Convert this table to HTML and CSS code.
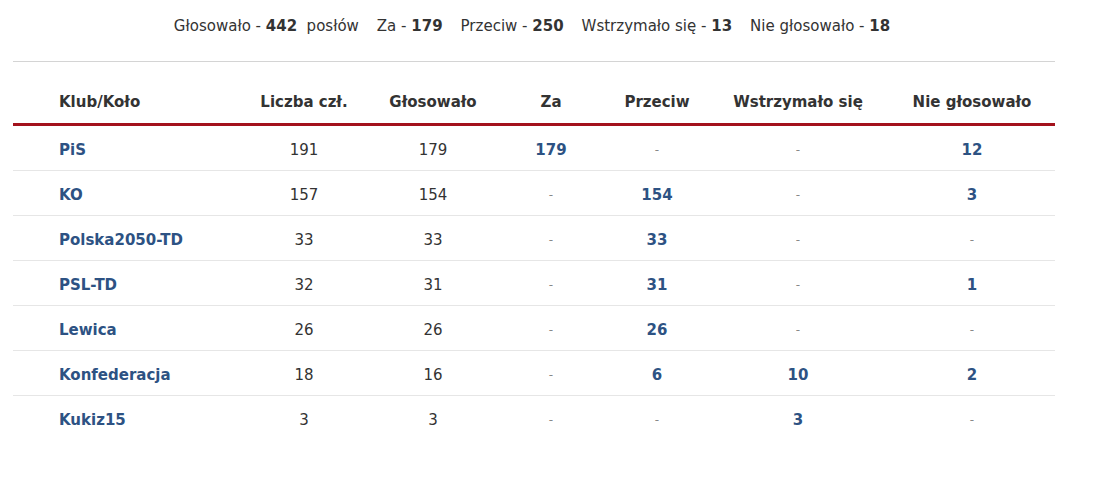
FILE: index.html
```html
<!DOCTYPE html>
<html lang="pl">
<head>
<meta charset="utf-8">
<link rel="stylesheet" href="styles.css">
</head>
<body>
<div class="wrap">
  <div class="summary">
    <span>Głosowało - <b>442</b>&nbsp; posłów</span>
    <span>Za - <b>179</b></span>
    <span>Przeciw - <b>250</b></span>
    <span>Wstrzymało się - <b>13</b></span>
    <span>Nie głosowało - <b>18</b></span>
  </div>
  <table class="votes">
    <colgroup>
      <col class="c1"><col class="c2"><col class="c3"><col class="c4"><col class="c5"><col class="c6"><col class="c7">
    </colgroup>
    <thead>
      <tr>
        <th class="club">Klub/Koło</th>
        <th>Liczba czł.</th>
        <th>Głosowało</th>
        <th>Za</th>
        <th>Przeciw</th>
        <th>Wstrzymało się</th>
        <th>Nie głosowało</th>
      </tr>
    </thead>
    <tbody>
      <tr><td class="club"><a>PiS</a></td><td>191</td><td>179</td><td class="v">179</td><td class="d">-</td><td class="d">-</td><td class="v">12</td></tr>
      <tr><td class="club"><a>KO</a></td><td>157</td><td>154</td><td class="d">-</td><td class="v">154</td><td class="d">-</td><td class="v">3</td></tr>
      <tr><td class="club"><a>Polska2050-TD</a></td><td>33</td><td>33</td><td class="d">-</td><td class="v">33</td><td class="d">-</td><td class="d">-</td></tr>
      <tr><td class="club"><a>PSL-TD</a></td><td>32</td><td>31</td><td class="d">-</td><td class="v">31</td><td class="d">-</td><td class="v">1</td></tr>
      <tr><td class="club"><a>Lewica</a></td><td>26</td><td>26</td><td class="d">-</td><td class="v">26</td><td class="d">-</td><td class="d">-</td></tr>
      <tr><td class="club"><a>Konfederacja</a></td><td>18</td><td>16</td><td class="d">-</td><td class="v">6</td><td class="v">10</td><td class="v">2</td></tr>
      <tr><td class="club"><a>Kukiz15</a></td><td>3</td><td>3</td><td class="d">-</td><td class="d">-</td><td class="v">3</td><td class="d">-</td></tr>
    </tbody>
  </table>
</div>
</body>
</html>
```
FILE: styles.css
```css
html, body {
  margin: 0;
  padding: 0;
  background: #fff;
}
body {
  font-family: "DejaVu Sans", Verdana, sans-serif;
  color: #333;
  font-size: 15px;
}
.wrap {
  margin-left: 13px;
  width: 1042px;
}
.summary {
  height: 62px;
  box-sizing: border-box;
  padding-top: 17px;
  padding-right: 4px;
  line-height: 18px;
  border-bottom: 1px solid #d4d4d4;
  display: flex;
  justify-content: center;
  gap: 18px;
}
.summary b {
  font-weight: bold;
  color: #333;
}
.votes {
  width: 1042px;
  border-collapse: collapse;
  table-layout: fixed;
}
.c1 { width: 224px; }
.c2 { width: 134px; }
.c3 { width: 124px; }
.c4 { width: 112px; }
.c5 { width: 100px; }
.c6 { width: 182px; }
.c7 { width: 166px; }
.votes th {
  height: 49px;
  vertical-align: bottom;
  padding: 0 0 12px 0;
  line-height: 18px;
  font-weight: bold;
  text-align: center;
  color: #333;
  border-bottom: 3px solid #a3121c;
}
.votes td {
  height: 41px;
  padding: 3px 0 0 0;
  text-align: center;
  line-height: 18px;
  border-bottom: 1px solid #e6e6e6;
  color: #333;
}
.votes tbody tr:last-child td {
  border-bottom: none;
}
.votes th.club, .votes td.club {
  text-align: left;
  padding-left: 46px;
}
.votes td.club a {
  color: #2d5283;
  font-weight: bold;
  text-decoration: none;
}
.votes td.v {
  color: #2d5283;
  font-weight: bold;
}
.votes td.d {
  color: #888;
  font-size: 12px;
}
```
